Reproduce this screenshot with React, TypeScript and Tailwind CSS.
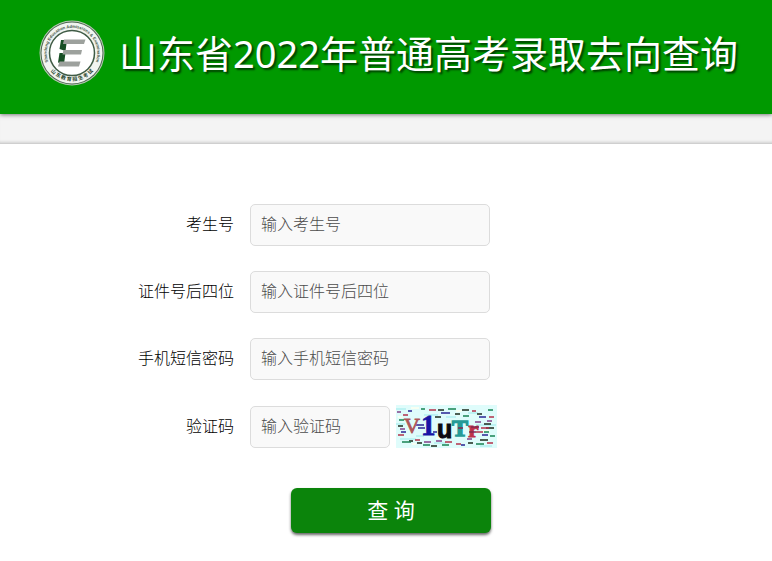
function Logo() {
  return (
    <svg className="size-[66px] shrink-0" viewBox="0 0 66 66" role="img" aria-label="山东教育招生考试">
      <defs>
        <path id="ring-top" d="M9.500 42.500 A25.300 25.300 0 1 1 56.500 42.500" />
        <path id="ring-bottom" d="M8 46 A28.400 28.400 0 0 0 58 46" />
      </defs>
      <circle cx="33" cy="33" r="32.500" fill="#b9c9b6" />
      <circle cx="33" cy="33" r="31.500" fill="#4c6650" />
      <circle cx="33" cy="33" r="30.500" fill="#f1f4f0" />
      <circle cx="33" cy="33" r="22.500" fill="#fff" stroke="#3f5b45" strokeWidth="1.500" />
      <text fill="#3f5544" fontFamily="Liberation Sans" fontWeight="700" fontSize="4.200">
        <textPath href="#ring-top" startOffset="50%" textAnchor="middle">
          Shandong Education Admissions &amp; Examination
        </textPath>
      </text>
      <text fill="#26452d" fontFamily="Noto Sans CJK SC" fontWeight="700" fontSize="5">
        <textPath href="#ring-bottom" startOffset="50%" textAnchor="middle">
          山 东 教 育 招 生 考 试
        </textPath>
      </text>
      <path d="M22 20h6l-1.500 11l-6 -2z M20.500 33h6l-1.500 11l-6 -1.500z" fill="#174f25" />
      <path d="M25 19.500h21.500l-1.500 4.500h-21z M24.500 30h18.500l-1 4.500h-18.500z M20.500 41.500h21l-1.500 5h-21z" fill="#9da19d" />
    </svg>
  );
}

const specks: { color: string; d: string }[] = [
  {
    color: "#1d2a1d",
    d: "M42 5h6 M59 9h5 M66 5h7 M88 19h7 M2 21h5 M90 23h8 M21 38h5 M35 41h6 M84 35h8 M72 38h5 M39 12h6 M81 9h5 M13 36h4",
  },
  {
    color: "#2a2594",
    d: "M45 8h9 M20 20h8 M22 23h7 M83 12h7 M5 27h5 M86 30h6 M65 40h4 M12 6h4 M37 27h4",
  },
  {
    color: "#b3324b",
    d: "M7 10h5 M33 5h7 M85 23h8 M2 30h6 M19 35h5 M49 37h7 M91 38h6 M60 39h5 M80 27h7 M76 6h4 M93 12h5",
  },
  {
    color: "#188253",
    d: "M52 4h8 M3 15h5 M6 37h9 M27 40h7 M46 40h7 M92 5h5 M88 27h5 M25 4h4 M67 11h6 M94 31h5 M80 39h8",
  },
  {
    color: "#82418b",
    d: "M1 7h4 M28 37h7 M79 17h6 M91 16h5 M40 36h6 M4 24h5 M71 34h5",
  },
];

function Captcha() {
  return (
    <svg className="h-[43px] w-[101px]" viewBox="0 0 101 43" role="img" aria-label="验证码图片">
      <rect width="101" height="43" fill="#dffcfb" />
      <path
        d="M0 4h10 M28 10h14 M72 8h10 M0 19h9 M80 20h20 M4 34h16 M38 38h12 M84 41h12 M50 12h10 M20 31h8"
        stroke="#bdf3f3"
        strokeWidth="2"
      />
      <path d="M15 3h8 M2 12h5 M60 6h6 M40 33h6 M86 26h8 M16 39h4" stroke="#f7fff2" strokeWidth="2" />
      {specks.map((s) => (
        <path key={s.color} d={s.d} stroke={s.color} strokeWidth="1.600" />
      ))}
      <text x="8" y="28" fill="#ae5658" stroke="#ae5658" strokeWidth="0.800" fontFamily="Liberation Serif" fontSize="22">V</text>
      <text x="25" y="30" fill="#1915a5" stroke="#1915a5" strokeWidth="0.800" fontFamily="Liberation Serif" fontWeight="700" fontSize="29">1</text>
      <text x="41" y="33" fill="#0b0b10" stroke="#0b0b10" strokeWidth="1" fontFamily="Liberation Sans" fontWeight="700" fontSize="25">u</text>
      <text x="56" y="31" fill="#259b97" stroke="#259b97" strokeWidth="1.500" fontFamily="Liberation Serif" fontWeight="700" fontSize="24">T</text>
      <text x="72" y="32" fill="#bd314c" stroke="#bd314c" strokeWidth="0.800" fontFamily="Liberation Serif" fontWeight="700" fontSize="24">r</text>
      <path d="M62 23h5 M75 22h8 M73 27h7" stroke="#83294d" strokeWidth="1.500" />
    </svg>
  );
}

const inputStyle =
  "h-[42px] min-w-0 rounded-[5px] border border-[#dcdcdc] bg-[#f9f9f9] px-[10px] pb-[2px] text-base text-[#222] placeholder:text-[#4c4c4c] outline-none focus:border-[#078407]";

const labelStyle = "w-[234px] shrink-0 pb-[2px] text-right";

const fields = [
  { id: "examinee", label: "考生号", hint: "输入考生号" },
  { id: "certificate", label: "证件号后四位", hint: "输入证件号后四位" },
  { id: "sms", label: "手机短信密码", hint: "输入手机短信密码" },
];

export default function App() {
  return (
    <div className="min-h-screen bg-white font-['Noto_Sans','Noto_Sans_CJK_SC',sans-serif] text-base font-light text-black">
      <header className="relative flex h-[114px] items-start gap-[14px] bg-[#009900] pl-[39px] pt-5 shadow-[0_1px_4px_rgba(0,0,0,0.5)]">
        <Logo />
        <h1 className="whitespace-nowrap pt-[5px] text-[38px] font-normal leading-[56px] text-white [text-shadow:2px_2px_2px_rgba(0,0,0,0.6)]">
          山东省2022年普通高考录取去向查询
        </h1>
      </header>
      <div className="h-[30px] border-b border-[#cfcfcf] bg-[#f4f4f4] shadow-[inset_0_-3px_3px_-2px_rgba(0,0,0,0.15)]" />
      <main className="pt-[60px]">
        <form className="flex flex-col gap-[25px]" onSubmit={(e) => e.preventDefault()}>
          {fields.map((f) => (
            <div key={f.id} className="flex items-center gap-4">
              <label htmlFor={f.id} className={labelStyle}>
                {f.label}
              </label>
              <input id={f.id} type="text" placeholder={f.hint} className={`${inputStyle} w-60`} />
            </div>
          ))}
          <div className="flex items-center gap-4">
            <label htmlFor="code" className={labelStyle}>
              验证码
            </label>
            <div className="flex items-center gap-[6px]">
              <input id="code" type="text" placeholder="输入验证码" className={`${inputStyle} w-[140px]`} />
              <Captcha />
            </div>
          </div>
          <div className="pl-[291px] pt-[15px]">
            <button
              type="submit"
              className="h-[45px] w-[200px] rounded-md bg-[#0b840b] text-[21px] font-normal text-white shadow-[0_2px_3px_rgba(0,0,0,0.6)]"
            >
              查 询
            </button>
          </div>
        </form>
      </main>
    </div>
  );
}
